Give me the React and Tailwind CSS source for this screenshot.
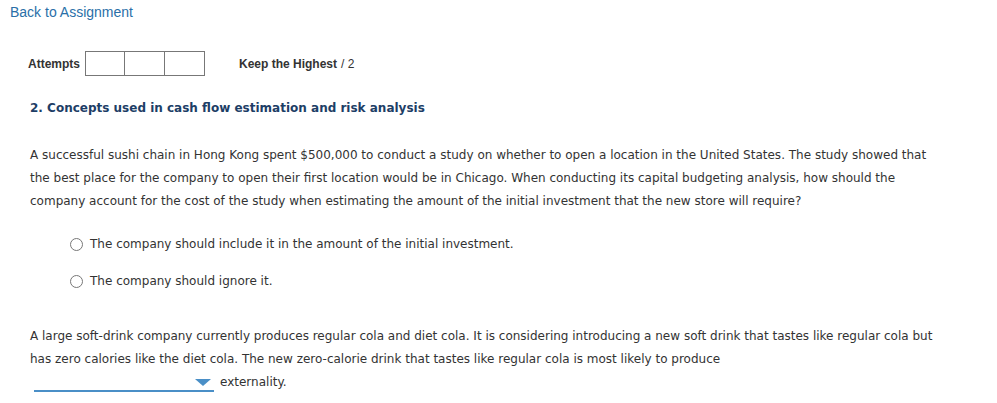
import React, { useState } from "react";

const verdana = { fontFamily: "Verdana, 'DejaVu Sans', sans-serif" };

const Radio = ({ label, checked, onClick }) => (
  <label className="flex items-center gap-[7px] cursor-pointer" onClick={onClick}>
    <span className="w-[13px] h-[13px] rounded-full border border-[#777] bg-white flex items-center justify-center">
      {checked && <span className="w-[7px] h-[7px] rounded-full bg-[#333]" />}
    </span>
    <span>{label}</span>
  </label>
);

export default function App() {
  const [choice, setChoice] = useState(null);

  return (
    <div className="w-[997px] h-[403px] bg-white overflow-hidden text-[#333]">
      <div className="pl-[10px] pt-[2px] font-['Liberation_Sans',Arial,sans-serif] text-[14px] text-[#2a6fa8]">
        <a href="#">Back to Assignment</a>
      </div>

      <div className="flex items-center pl-[28px] mt-[28px] font-['Liberation_Sans',Arial,sans-serif] text-[12px] text-[#333]">
        <span className="font-bold mr-[5px]">Attempts</span>
        <div className="flex border border-[#777]">
          <div className="w-[39px] h-[23px] border-r border-[#777]" />
          <div className="w-[40px] h-[23px] border-r border-[#777]" />
          <div className="w-[39px] h-[23px]" />
        </div>
        <span className="ml-[34px] font-bold">Keep the Highest</span>
        <span className="ml-[4px]">/ 2</span>
      </div>

      <div className="pl-[30px] text-[12px] text-[#333]" style={verdana}>
        <h2 className="mt-[24px] font-bold text-[#1d3e66] text-[12px] leading-[16px]">
          2. Concepts used in cash flow estimation and risk analysis
        </h2>

        <p className="mt-[28px] leading-[23px] pr-[50px]">
          A successful sushi chain in Hong Kong spent $500,000 to conduct a study on whether to open a location in the United States. The study showed that the best place for the company to open their first location would be in Chicago. When conducting its capital budgeting analysis, how should the company account for the cost of the study when estimating the amount of the initial investment that the new store will require?
        </p>

        <div className="mt-[22px] pl-[40px] flex flex-col gap-[19px]">
          <Radio
            label="The company should include it in the amount of the initial investment."
            checked={choice === 0}
            onClick={() => setChoice(0)}
          />
          <Radio
            label="The company should ignore it."
            checked={choice === 1}
            onClick={() => setChoice(1)}
          />
        </div>

        <p className="mt-[35px] leading-[23px] pr-[40px]">
          A large soft-drink company currently produces regular cola and diet cola. It is considering introducing a new soft drink that tastes like regular cola but has zero calories like the diet cola. The new zero-calorie drink that tastes like regular cola is most likely to produce
        </p>
        <div className="flex items-end mt-[1px]">
          <div className="relative w-[180px] h-[20px] ml-[4px] border-b-2 border-[#4a8fc7]">
            <svg className="absolute right-[3px] top-[7px]" width="16" height="7" viewBox="0 0 16 7">
              <polygon points="0,0 16,0 8,7" fill="#4a8fc7" />
            </svg>
          </div>
          <span className="ml-[6px] leading-[20px]">externality.</span>
        </div>
      </div>
    </div>
  );
}
